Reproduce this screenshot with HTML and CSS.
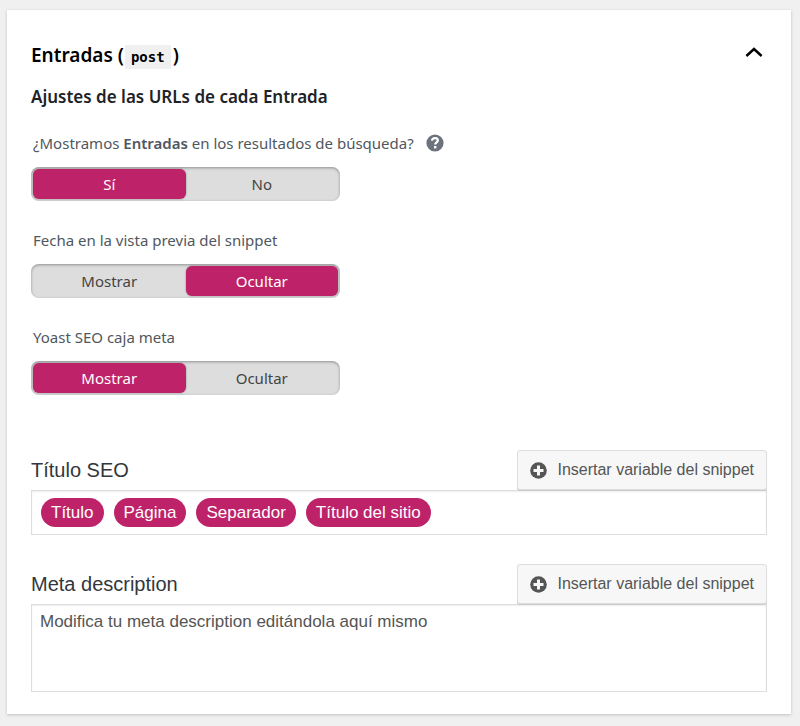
FILE: index.html
```html
<!DOCTYPE html>
<html lang="es">
<head>
  <meta charset="UTF-8" />
  <meta name="viewport" content="width=device-width, initial-scale=1.0" />
  <title>Entradas</title>
  <link rel="stylesheet" href="styles.css">
</head>
<body>
  <main class="card">
    <div class="card-header">
      <h2>Entradas (<code>post</code>)</h2>
      <button class="toggle-card" type="button" aria-label="Contraer" aria-expanded="true">
        <svg width="18" height="11" viewBox="0 0 18 11"><path d="M1.4 9 9 2l7.6 7" fill="none" stroke="currentColor" stroke-width="2.4"/></svg>
      </button>
    </div>

    <h3>Ajustes de las URLs de cada Entrada</h3>

    <div class="options">
      <fieldset class="option">
        <legend>
          <span>¿Mostramos <strong>Entradas</strong> en los resultados de búsqueda?</span>
          <button class="help" type="button" aria-label="Ayuda">
            <svg width="18" height="18" viewBox="0 0 18 18">
              <circle cx="9" cy="9" r="8.6" fill="currentColor"/>
              <path d="M6 6.7C6.2 5 7.4 4.2 9 4.2c1.7 0 2.8.8 2.8 2.2 0 2-2.6 1.9-2.6 4.2" fill="none" stroke="#fff" stroke-width="2.3"/>
              <rect x="8" y="12" width="2.4" height="2.4" fill="#fff"/>
            </svg>
          </button>
        </legend>
        <div class="switch">
          <label><input type="radio" name="index" checked><span>Sí</span></label>
          <label><input type="radio" name="index"><span>No</span></label>
        </div>
      </fieldset>

      <fieldset class="option">
        <legend>Fecha en la vista previa del snippet</legend>
        <div class="switch">
          <label><input type="radio" name="date"><span>Mostrar</span></label>
          <label><input type="radio" name="date" checked><span>Ocultar</span></label>
        </div>
      </fieldset>

      <fieldset class="option">
        <legend>Yoast SEO caja meta</legend>
        <div class="switch">
          <label><input type="radio" name="metabox" checked><span>Mostrar</span></label>
          <label><input type="radio" name="metabox"><span>Ocultar</span></label>
        </div>
      </fieldset>
    </div>

    <div class="fields">
      <div class="field">
        <div class="field-header">
          <span class="field-label" id="title-label">Título SEO</span>
          <button class="insert-button" type="button">
            <svg width="17" height="17" viewBox="0 0 17 17"><circle cx="8.5" cy="8.5" r="8.3" fill="currentColor"/><path d="M8.5 3.5v10M3.5 8.5h10" stroke="#f7f7f7" stroke-width="3"/></svg>
            Insertar variable del snippet
          </button>
        </div>
        <div class="editor tags" role="textbox" tabindex="0" aria-labelledby="title-label">
          <span class="tag">Título</span>
          <span class="tag">Página</span>
          <span class="tag">Separador</span>
          <span class="tag">Título del sitio</span>
        </div>
      </div>

      <div class="field">
        <div class="field-header">
          <label class="field-label" for="meta-description">Meta description</label>
          <button class="insert-button" type="button">
            <svg width="17" height="17" viewBox="0 0 17 17"><circle cx="8.5" cy="8.5" r="8.3" fill="currentColor"/><path d="M8.5 3.5v10M3.5 8.5h10" stroke="#f7f7f7" stroke-width="3"/></svg>
            Insertar variable del snippet
          </button>
        </div>
        <textarea class="editor description" id="meta-description">Modifica tu meta description editándola aquí mismo</textarea>
      </div>
    </div>
  </main>
</body>
</html>
```
FILE: styles.css
```css
* {
  margin: 0;
  padding: 0;
  box-sizing: border-box;
}

body {
  padding: 10px 9px 12px 7px;
  font-family: "Noto Sans", "Open Sans", sans-serif;
  font-size: 15px;
  line-height: 24px;
  background-color: #f0f0f0;
  color: #50575e;
}

button {
  font: inherit;
  border: none;
  background: none;
  cursor: pointer;
}

svg {
  display: block;
}

.card {
  padding: 24px 24px 22px;
  background-color: #fff;
  box-shadow: 0 1px 3px rgba(0, 0, 0, 0.2);
}

.card-header {
  display: flex;
  justify-content: space-between;
  align-items: center;
  height: 44px;
}

h2 {
  font-size: 19px;
  font-weight: 600;
  color: #000;
}

h2 code {
  display: inline-block;
  margin: 0 2px 0 1px;
  padding: 0 6px;
  font-family: "DejaVu Sans Mono", monospace;
  font-size: 14px;
  font-weight: 700;
  background-color: #f0f0f0;
}

.toggle-card {
  margin-bottom: 8px;
  padding: 3px 4px;
  color: #000;
}

h3 {
  margin-top: 7px;
  font-size: 17px;
  font-weight: 600;
  color: #1d2327;
}

.options {
  display: flex;
  flex-direction: column;
  gap: 27px;
  margin-top: 22px;
}

.option {
  border: none;
}

.option legend {
  display: flex;
  align-items: center;
  gap: 12px;
  padding-left: 2px;
}

.option strong {
  font-weight: 600;
}

.help {
  color: #6c737d;
}

.switch {
  display: flex;
  width: 309px;
  height: 34px;
  margin-top: 12px;
  padding: 2px;
  background-color: #ddd;
  border-radius: 8px;
  box-shadow: inset 0 1px 3px rgba(0, 0, 0, 0.35);
}

.switch label {
  position: relative;
  flex: 1;
  color: #444;
  cursor: pointer;
}

.switch input {
  position: absolute;
  inset: 0;
  opacity: 0;
}

.switch span {
  display: block;
  line-height: 30px;
  text-align: center;
  border-radius: 6px;
}

.switch input:checked + span {
  background-color: #be2369;
  color: #fff;
  box-shadow: 0 0 2px rgba(0, 0, 0, 0.4);
}

.fields {
  display: flex;
  flex-direction: column;
  gap: 29px;
  margin-top: 55px;
  font-family: "Liberation Sans", Arial, sans-serif;
}

.field-header {
  display: flex;
  justify-content: space-between;
  align-items: center;
}

.field-label {
  font-size: 20px;
  color: #32373c;
}

.insert-button {
  display: flex;
  align-items: center;
  gap: 10px;
  height: 40px;
  padding: 0 12px;
  font-size: 16px;
  color: #555;
  background-color: #f7f7f7;
  border: 1px solid #ddd;
  border-radius: 3px;
  box-shadow: 0 1px 0 #ccc;
}

.editor {
  display: block;
  width: 100%;
  border: 1px solid #ddd;
  background-color: #fff;
  box-shadow: inset 0 1px 2px rgba(0, 0, 0, 0.07);
}

.tags {
  display: flex;
  flex-wrap: wrap;
  gap: 10px;
  padding: 7px 9px;
}

.tag {
  padding: 0 10px;
  font-size: 17px;
  line-height: 29px;
  color: #fff;
  background-color: #be2369;
  border-radius: 15px;
}

.description {
  height: 88px;
  padding: 5px 8px;
  font-family: inherit;
  font-size: 17px;
  line-height: 24px;
  color: #555;
  resize: none;
}
```
